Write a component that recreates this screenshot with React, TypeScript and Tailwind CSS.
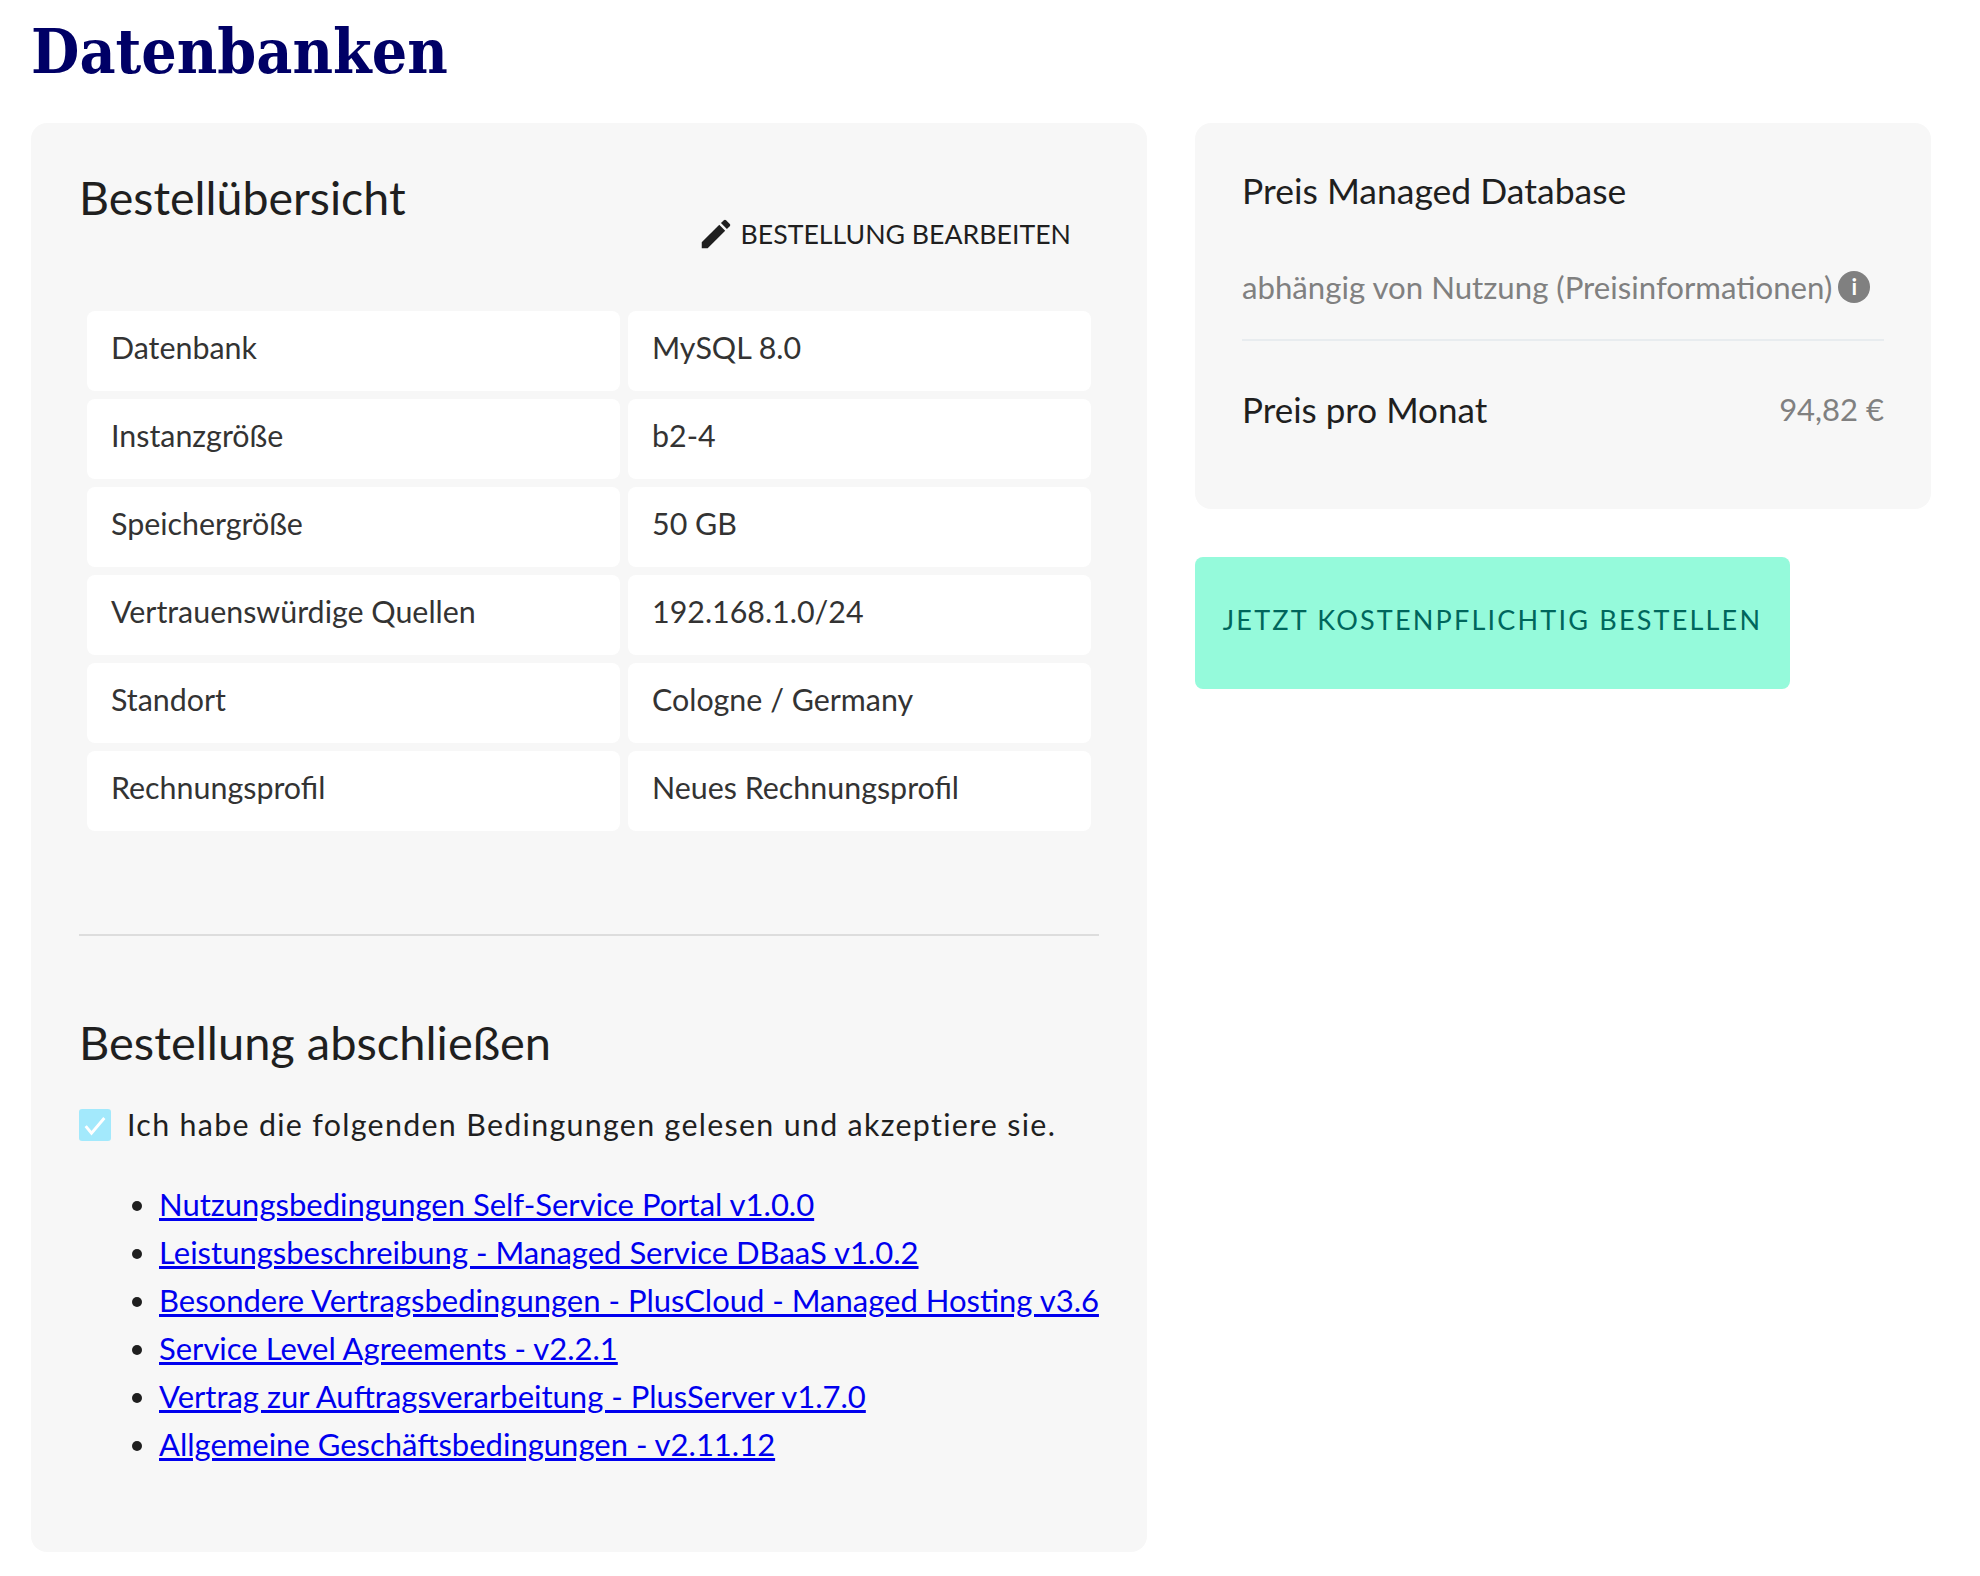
import React from 'react';

const rows = [
  ['Datenbank', 'MySQL 8.0'],
  ['Instanzgröße', 'b2-4'],
  ['Speichergröße', '50 GB'],
  ['Vertrauenswürdige Quellen', '192.168.1.0/24'],
  ['Standort', 'Cologne / Germany'],
  ['Rechnungsprofil', 'Neues Rechnungsprofil'],
];

const links = [
  'Nutzungsbedingungen Self-Service Portal v1.0.0',
  'Leistungsbeschreibung - Managed Service DBaaS v1.0.2',
  'Besondere Vertragsbedingungen - PlusCloud - Managed Hosting v3.6',
  'Service Level Agreements - v2.2.1',
  'Vertrag zur Auftragsverarbeitung - PlusServer v1.7.0',
  'Allgemeine Geschäftsbedingungen - v2.11.12',
];

const App = () => {
  return (
    <div className="w-[1980px] h-[1576px] bg-white pl-[31px] font-['Lato',sans-serif] text-[#1f1f1f]">
      <h1 className="h-[123px] pt-[16px] font-['DejaVu_Serif_Condensed','DejaVu_Serif',serif] font-bold text-[62px] leading-[72px] text-[#000066]">
        Datenbanken
      </h1>

      <div className="flex items-start gap-[48px]">
        <div className="w-[1116px] h-[1429px] bg-[#f7f7f7] rounded-2xl px-[48px]">
          <div className="flex h-[180px] items-start justify-between">
            <h2 className="pt-[44px] text-[46.5px] leading-[60px]">Bestellübersicht</h2>
            <button className="mt-[92px] mr-[28px] flex items-center gap-[6px] text-[26.7px] leading-[36px]">
              <svg viewBox="0 0 24 24" className="w-[38px] h-[38px] fill-[#1f1f1f]">
                <path d="M3 17.25V21h3.75L17.81 9.94l-3.75-3.75L3 17.25zM20.71 7.04a1 1 0 0 0 0-1.41l-2.34-2.34a1 1 0 0 0-1.41 0l-1.83 1.83 3.75 3.75 1.83-1.83z" />
              </svg>
              BESTELLUNG BEARBEITEN
            </button>
          </div>

          <div className="grid grid-cols-[533px_463px] gap-2 p-2 text-[30.4px] text-[#333333]">
            {rows.map(([label, value]) => (
              <React.Fragment key={label}>
                <div className="h-[80px] bg-white rounded-lg px-6 pt-[16px] leading-[40px]">{label}</div>
                <div className="h-[80px] bg-white rounded-lg px-6 pt-[16px] leading-[40px]">{value}</div>
              </React.Fragment>
            ))}
          </div>

          <div className="mt-[95px] border-t-2 border-[#dddddd]" />

          <h2 className="mt-[76px] text-[47px] leading-[60px]">Bestellung abschließen</h2>

          <label className="mt-[32px] flex items-start gap-[16px] text-[30.4px] leading-[40px] tracking-[1.3px]">
            <span className="mt-[5px] flex w-[32px] h-[32px] items-center justify-center rounded-[3px] bg-[#a3e9fc]">
              <svg viewBox="0 0 24 24" className="w-[28px] h-[28px] fill-none stroke-white stroke-[2.5]">
                <path d="M4 13l5 6L20 6" />
              </svg>
            </span>
            Ich habe die folgenden Bedingungen gelesen und akzeptiere sie.
          </label>

          <ul className="mt-[36px] list-disc pl-[80px] text-[31px] leading-[48px]">
            {links.map((link) => (
              <li key={link}>
                <a href="#" className="text-[#0000ee] underline">{link}</a>
              </li>
            ))}
          </ul>
        </div>

        <div className="w-[736px]">
          <div className="h-[386px] bg-[#f7f7f7] rounded-2xl px-[47px] pt-[46px]">
            <p className="text-[35.5px] leading-[44px]">Preis Managed Database</p>
            <div className="mt-[49px] flex h-[77px] items-start text-[31.2px] leading-[50px] text-[#808080]">
              abhängig von Nutzung (Preisinformationen)
              <span className="ml-[6px] mt-[9px] flex w-[32px] h-[32px] items-center justify-center rounded-full bg-[#808080] text-white font-bold text-[22px] leading-none">i</span>
            </div>
            <div className="border-t-2 border-[#e8ecef] flex items-center justify-between pt-[46px]">
              <span className="text-[35px] leading-[44px]">Preis pro Monat</span>
              <span className="text-[31px] leading-[44px] text-[#808080]">94,82 €</span>
            </div>
          </div>

          <button className="mt-[48px] w-[595px] h-[132px] pb-[5px] bg-[#95fadb] rounded-lg text-[27px] tracking-[2.2px] text-[#00665c]">
            JETZT KOSTENPFLICHTIG BESTELLEN
          </button>
        </div>
      </div>
    </div>
  );
};

export default App;
